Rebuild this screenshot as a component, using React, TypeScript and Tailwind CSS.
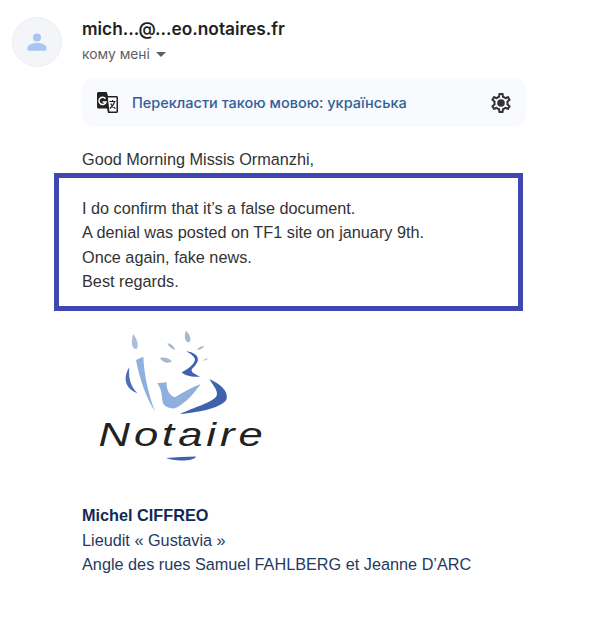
function Avatar() {
  return (
    <div className="flex h-[50px] w-[50px] shrink-0 items-center justify-center rounded-full border border-[#eceef1] bg-[#f3f5f8]">
      <svg width="24" height="24" viewBox="0 0 24 24" fill="#a9c5f2">
        <circle cx="12" cy="7.5" r="4" />
        <path d="M2.500 20v-2.200C2.500 14.800 7.500 13 12 13s9.500 1.800 9.500 4.800V20c0 .5-.4.800-1 .800h-17c-.6 0-1-.3-1-.8z" />
      </svg>
    </div>
  );
}

function TranslateIcon() {
  return (
    <svg width="23" height="23" viewBox="0 0 23 23" className="shrink-0">
      <path d="M1 2.500C1 1.700 1.700 1 2.500 1h8.200l1.300 4h8.500c.8 0 1.500.7 1.500 1.500v14c0 .8-.7 1.500-1.500 1.500H12l-1-4.500H2.500C1.700 17.500 1 16.800 1 16z" fill="#222" />
      <path d="M11.300 6h8.700c.5 0 1 .4 1 1v13c0 .6-.5 1-1 1h-7z" fill="#fff" stroke="#222" strokeWidth="1" />
      <path d="M9.500 7.800A3.600 3.600 0 1 0 10 11H6.500" fill="none" stroke="#fff" strokeWidth="1.500" />
      <path d="M13.500 10.500h6M16.500 9v1.500M18.500 10.500c-.6 3-2.400 5.500-4.700 7M14.800 12.500c.8 2 2.500 3.800 4.700 5" fill="none" stroke="#222" strokeWidth="1.200" />
    </svg>
  );
}

function GearIcon() {
  return (
    <svg width="24" height="24" viewBox="0 0 24 24" fill="#333" className="ml-auto shrink-0">
      <path d="M19.430 12.980c.04-.32.07-.64.07-.98 0-.34-.03-.66-.07-.98l2.110-1.650c.19-.15.24-.42.12-.64l-2-3.460c-.09-.16-.26-.25-.44-.25-.06 0-.12.01-.17.03l-2.490 1c-.52-.4-1.080-.73-1.690-.98l-.38-2.650C14.460 2.180 14.250 2 14 2h-4c-.25 0-.46.18-.49.42l-.38 2.650c-.61.25-1.170.59-1.690.98l-2.490-1c-.06-.02-.12-.03-.18-.03-.17 0-.34.09-.43.25l-2 3.460c-.13.22-.07.49.12.64l2.110 1.650c-.04.32-.07.65-.07.98 0 .33.03.66.07.98l-2.110 1.650c-.19.15-.24.42-.12.64l2 3.460c.09.16.26.25.44.25.06 0 .12-.01.17-.03l2.490-1c.52.4 1.080.73 1.690.98l.38 2.650c.03.24.24.42.49.42h4c.25 0 .46-.18.49-.42l.38-2.650c.61-.25 1.170-.59 1.690-.98l2.490 1c.06.02.12.03.18.03.17 0 .34-.09.43-.25l2-3.460c.12-.22.07-.49-.12-.64l-2.110-1.650zm-1.980-1.710c.04.31.05.52.05.73 0 .21-.02.43-.05.73l-.14 1.130.89.7 1.080.84-.7 1.210-1.270-.51-1.040-.42-.9.68c-.43.32-.84.56-1.250.73l-1.060.43-.16 1.130-.2 1.350h-1.400l-.19-1.350-.16-1.130-1.060-.43c-.43-.18-.83-.41-1.230-.71l-.91-.7-1.060.43-1.270.51-.7-1.210 1.080-.84.89-.7-.14-1.130c-.03-.31-.05-.54-.05-.74s.02-.43.05-.73l.14-1.130-.89-.7-1.080-.84.7-1.210 1.270.51 1.040.42.9-.68c.43-.32.84-.56 1.250-.73l1.060-.43.16-1.130.2-1.350h1.390l.19 1.350.16 1.130 1.060.43c.43.18.83.41 1.230.71l.91.7 1.060-.43 1.270-.51.7 1.210-1.070.85-.89.7.14 1.130z" />
      <circle cx="12" cy="12" r="3.800" />
    </svg>
  );
}

function Logo() {
  return (
    <div className="w-[200px]">
      <svg width="200" height="91" viewBox="0 0 600 273" className="block">
        <path d="M160 30C170 45 178 60 170 75C158 78 150 60 160 30Z" fill="#a9bedc" />
        <path d="M168 108L190 98C192 150 205 210 225 262C200 225 180 170 168 108Z" fill="#8fb0dc" />
        <path d="M148 130C128 160 135 195 172 208C150 185 145 160 148 130Z" fill="#4a6fb5" />
        <path d="M318 20C330 32 335 45 328 55C316 55 310 40 318 20Z" fill="#a8b8cf" />
        <path d="M262 58C275 60 282 68 286 78C274 76 266 68 262 58Z" fill="#a8b8cf" />
        <path d="M350 78C356 70 364 66 373 65C368 74 360 78 350 78Z" fill="#a8b8cf" />
        <path d="M240 102C252 98 268 104 276 112C264 120 248 116 240 102Z" fill="#a8b8cf" />
        <path d="M365 110L383 102L380 108Z" fill="#a8b8cf" />
        <path d="M318 82C350 85 365 105 345 125C335 135 328 140 345 150L360 158C335 160 315 155 305 145C325 135 345 120 345 105C340 95 330 88 318 82Z" fill="#3f62ad" />
        <path d="M232 178L260 175C258 195 268 215 285 220C310 205 335 190 362 180C345 205 315 240 285 253C265 255 250 245 248 235C245 215 245 195 232 178Z" fill="#8fb0dc" />
        <path d="M388 165C420 180 445 200 440 225C430 250 360 265 300 270C340 250 400 235 410 215C415 200 400 185 388 165Z" fill="#3f62ad" />
      </svg>
      <div className="mt-[2px] origin-left scale-x-[1.32] pl-[14px] font-['Liberation_Sans',sans-serif] text-[33px] leading-[36px] tracking-[3px] text-[#222] italic">
        Notaire
      </div>
      <svg width="30" height="5" viewBox="0 0 30 5" className="mt-[3px] ml-[86px] block">
        <path d="M0 2C10 1.500 20 .5 30 .5C29 3 24 4.500 15 4.500C9 4.500 4 3.500 0 2Z" fill="#3f62ad" />
      </svg>
    </div>
  );
}

export default function App() {
  return (
    <div className="h-[620px] w-[606px] overflow-hidden bg-white pt-[17px] font-['Liberation_Sans',sans-serif] text-[16.250px] text-[#333]">
      <div className="flex gap-[20px] pl-[12px]">
        <Avatar />
        <div>
          <div className="font-['Inter',sans-serif] text-[17.300px] leading-[24px] font-semibold text-[#1f1f1f]">
            mich...@...eo.notaires.fr
          </div>
          <div className="mt-[3px] flex items-center gap-[6px] font-['Inter',sans-serif] text-[13.800px] leading-[20px] text-[#5e5e5e]">
            кому мені
            <svg width="10" height="5" viewBox="0 0 10 5" fill="#5e5e5e">
              <path d="M0 0h10L5 5z" />
            </svg>
          </div>
        </div>
      </div>

      <div className="mt-[11px] ml-[82px] flex h-[49px] w-[444px] items-center rounded-[12px] bg-[#f8fafd] pr-[13px] pl-[14px]">
        <TranslateIcon />
        <span className="ml-[13px] font-['Inter',sans-serif] text-[14.500px] font-medium text-[#2f6098]">
          Перекласти такою мовою: українська
        </span>
        <GearIcon />
      </div>

      <div className="mt-[20px] pl-[82px] leading-[24.400px]">Good Morning Missis Ormanzhi,</div>

      <div className="mt-[2px] ml-[54px] h-[138px] w-[469px] border-[5px] border-[#3f48b0] pt-[17.500px] pl-[23px] leading-[24.400px]">
        <div>I do confirm that it’s a false document.</div>
        <div>A denial was posted on TF1 site on january 9th.</div>
        <div>Once again, fake news.</div>
        <div>Best regards.</div>
      </div>

      <div className="mt-[13px] ml-[80px]">
        <Logo />
      </div>

      <div className="mt-[42px] pl-[82px] leading-[24.400px]">
        <div className="font-bold text-[#0f2a55]">Michel CIFFREO</div>
        <div className="text-[#1f3a5f]">Lieudit « Gustavia »</div>
        <div className="text-[#1f3a5f]">Angle des rues Samuel FAHLBERG et Jeanne D’ARC</div>
      </div>
    </div>
  );
}
